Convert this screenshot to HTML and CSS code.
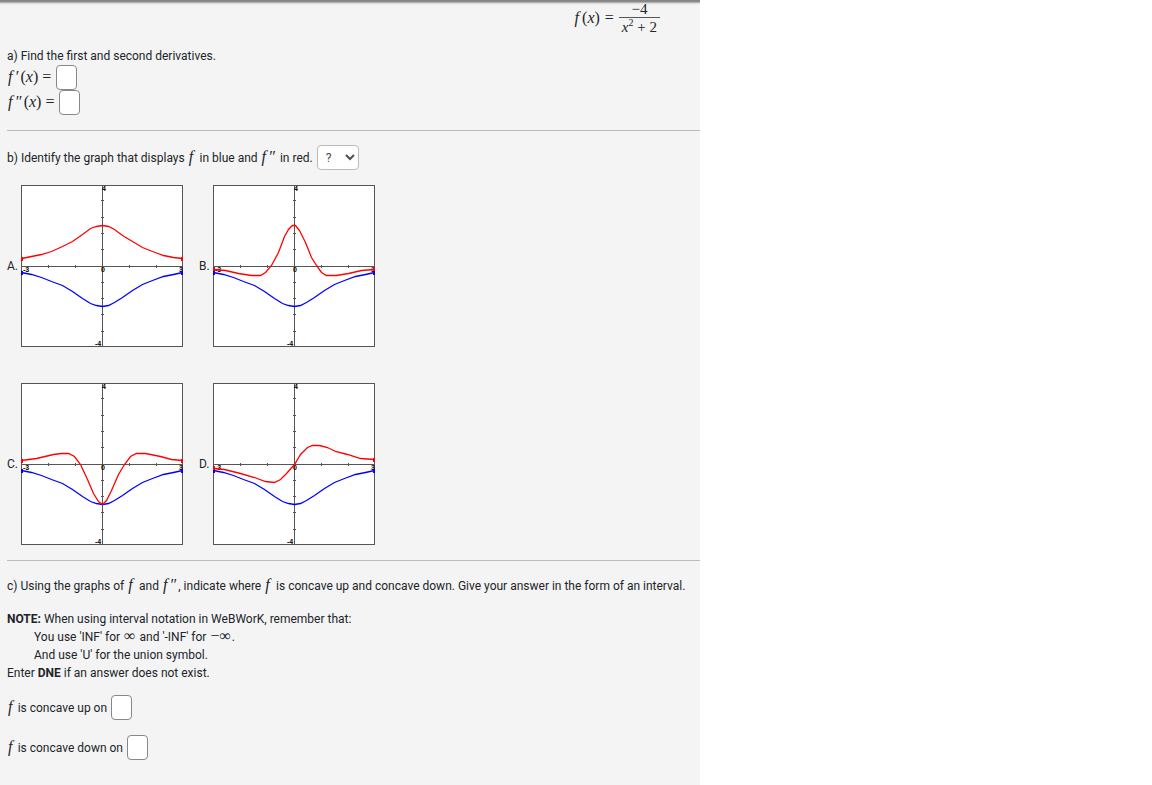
FILE: index.html
```html
<!DOCTYPE html>
<html lang="en">
<head>
  <meta charset="UTF-8" />
  <meta name="viewport" content="width=device-width, initial-scale=1" />
  <title>WeBWorK – Concavity</title>
  <link rel="stylesheet" href="styles.css">
</head>
<body>

  <!-- Shared parts of every graph -->
  <svg class="defs" aria-hidden="true">
    <defs>
      <g id="axes">
        <rect class="frame" x="0.5" y="0.5" width="161" height="161" />
        <path class="axis" d="M0 81.5H162M81.5 0V162M27.5 80V83M54.5 80V83M108.5 80V83M135.5 80V83M80 15.5H83M80 32.5H83M80 48.5H83M80 64.5H83M80 97.5H83M80 113.5H83M80 129.5H83M80 146.5H83" />
        <g class="ticks">
          <text x="81" y="6">4</text>
          <text x="74" y="161">-4</text>
          <text x="2" y="87">-3</text>
          <text x="158" y="87">3</text>
          <text x="80" y="87">0</text>
        </g>
      </g>
      <g id="blue" class="blue" transform="translate(0.5 0.5)">
        <path d="M0 87L10 89L20 92L30 96L41 100L51 106L61 113L69 118L75 120L81 121L87 120L93 117L101 112L111 105L121 99L131 95L142 91L152 89L161 87" />
        <path class="dot" d="M-0.5 85.5h2v4h-2zM159.5 85.5h2v4h-2z" />
      </g>
    </defs>
  </svg>

  <main class="problem">
    <div class="formula">
      <span class="math"><i>f</i>&thinsp;(<i>x</i>)</span>
      <span class="math">=</span>
      <span class="math fraction">
        <span>−4</span>
        <span class="bottom"><i>x</i><sup>2</sup> + 2</span>
      </span>
    </div>

    <section>
      <p>a) Find the first and second derivatives.</p>
      <div class="answer">
        <label for="first"><span class="math"><i>f</i>&thinsp;′&hairsp;(<i>x</i>) =</span></label>
        <input type="text" id="first">
      </div>
      <div class="answer">
        <label for="second"><span class="math"><i>f</i>&thinsp;″&hairsp;(<i>x</i>) =</span></label>
        <input type="text" id="second">
      </div>
    </section>

    <hr>

    <section>
      <div class="answer">
        <label for="graph">b) Identify the graph that displays <i class="math">f</i>&thinsp; in blue and <span class="math"><i>f</i>&thinsp;″</span> in red.</label>
        <select id="graph">
          <option>?</option>
          <option>A</option>
          <option>B</option>
          <option>C</option>
          <option>D</option>
        </select>
      </div>

      <div class="graphs">
        <figure>
          <figcaption>A.</figcaption>
          <svg viewBox="0 0 162 162">
            <use href="#axes" />
            <use href="#blue" />
            <g class="red" transform="translate(0.5 0.5)">
              <path d="M0 73L10 71L20 69L30 66L41 61L51 56L61 49L69 43L75 41L81 40L87 41L93 44L101 50L111 56L121 62L131 66L142 70L152 72L161 73" />
              <path class="dot" d="M-0.5 71.5h2v4h-2zM159.5 71.5h2v4h-2z" />
            </g>
          </svg>
        </figure>
        <figure>
          <figcaption>B.</figcaption>
          <svg viewBox="0 0 162 162">
            <use href="#axes" />
            <use href="#blue" />
            <g class="red" transform="translate(0.5 0.5)">
              <path d="M0 84L12 85L25 88L38 90L47 90L52 87L58 80L65 67L71 51L75 44L79 40L82 40L86 45L92 57L98 72L103 80L108 87L113 90L123 90L135 88L148 85L161 84" />
              <path class="dot" d="M-0.5 81.5h2v4h-2zM159.5 81.5h2v4h-2z" />
            </g>
          </svg>
        </figure>
        <figure>
          <figcaption>C.</figcaption>
          <svg viewBox="0 0 162 162">
            <use href="#axes" />
            <use href="#blue" />
            <g class="red" transform="translate(0.5 0.5)">
              <path d="M0 77L15 75L32 71L40 70L47 70L53 73L59 81L66 96L72 110L77 118L81 121L85 117L90 107L97 91L103 81L109 73L115 70L124 70L139 73L150 76L161 77" />
              <path class="dot" d="M-0.5 75.5h2v4h-2zM159.5 75.5h2v4h-2z" />
            </g>
          </svg>
        </figure>
        <figure>
          <figcaption>D.</figcaption>
          <svg viewBox="0 0 162 162">
            <use href="#axes" />
            <use href="#blue" />
            <g class="red" transform="translate(0.5 0.5)">
              <path d="M0 85L11 86L27 90L41 94L52 98L61 99L67 96L73 90L81 81L87 71L94 64L99 62L106 62L114 64L122 68L134 71L147 75L161 76" />
              <path class="dot" d="M-0.5 82.5h2v4h-2zM159.5 74.5h2v4h-2z" />
            </g>
          </svg>
        </figure>
      </div>
    </section>

    <hr>

    <section class="intervals">
      <p>c) Using the graphs of <i class="math">f</i>&thinsp; and <span class="math"><i>f</i>&thinsp;″</span>, indicate where <i class="math">f</i>&thinsp; is concave up and concave down. Give your answer in the form of an interval.</p>
      <div class="note">
        <p><b>NOTE:</b> When using interval notation in WeBWorK, remember that:</p>
        <p class="indent">You use 'INF' for <span class="math">∞</span> and '-INF' for <span class="math">−∞</span>.</p>
        <p class="indent">And use 'U' for the union symbol.</p>
        <p>Enter <b>DNE</b> if an answer does not exist.</p>
      </div>
      <div class="answer">
        <label for="up"><i class="math">f</i>&hairsp; is concave up on</label>
        <input type="text" id="up">
      </div>
      <div class="answer">
        <label for="down"><i class="math">f</i>&hairsp; is concave down on</label>
        <input type="text" id="down">
      </div>
    </section>
  </main>

</body>
</html>
```
FILE: styles.css
```css
* { margin: 0; padding: 0; box-sizing: border-box; }
body {
  background: #fff;
  color: #212529;
  font-family: Roboto, "Open Sans", sans-serif;
  font-size: 12px;
  line-height: 18px;
}
.defs { display: block; width: 0; height: 0; }

.problem {
  max-width: 700px;
  min-height: 100vh;
  padding-left: 7px;
  background: linear-gradient(#858585, #8c8c8c 2px, #d8d8d8 3px, #f4f4f4 5px);
  overflow: hidden;
}

/* Math */
.math {
  margin: 0 1px;
  font-family: "Liberation Serif", serif;
  font-size: 16px;
  line-height: 1;
}
.math sup { font-size: 10px; line-height: 1; }
.formula {
  display: flex;
  justify-content: flex-end;
  align-items: center;
  gap: 3px;
  height: 35px;
  padding-right: 39px;
}
.fraction {
  display: flex;
  flex-direction: column;
  align-items: center;
  font-size: 15px;
  line-height: 16px;
}
.fraction .bottom {
  padding: 0 3px;
  border-top: 1px solid #555;
}

/* Questions */
section p { white-space: nowrap; }
section:first-of-type { padding-top: 12px; }
hr {
  margin: 15px 0 14px;
  border: 0;
  border-top: 1px solid #bbb;
}
.answer {
  display: flex;
  align-items: center;
  gap: 4px;
}
input, select {
  height: 25px;
  border: 1px solid #888;
  border-radius: 4px;
  background: #fff;
  color: #495057;
  font: inherit;
}
input { width: 21px; }
select {
  width: 42px;
  padding-left: 4px;
  border-color: #bbb;
}

/* Graphs */
.graphs {
  display: grid;
  grid-template-columns: auto 1fr;
  gap: 36px 16px;
  padding-top: 15px;
}
figure { display: flex; align-items: center; }
figcaption { width: 14px; }
figure svg { width: 162px; height: 162px; background: #fff; }
.frame { fill: none; stroke: #555; }
.axis { fill: none; stroke: #555; shape-rendering: crispEdges; }
.ticks { font: bold 7px "Liberation Sans", sans-serif; fill: #000; }
.red path, .blue path { fill: none; stroke-width: 1.3; }
.red path { stroke: #f00; }
.blue path { stroke: #00f; }
.red .dot { fill: #f00; stroke: none; }
.blue .dot { fill: #00f; stroke: none; }

.intervals { padding-top: 2px; }
.note { padding: 15px 0 13px; }
.indent { padding-left: 27px; }
.intervals .answer + .answer { margin-top: 15px; }
```
